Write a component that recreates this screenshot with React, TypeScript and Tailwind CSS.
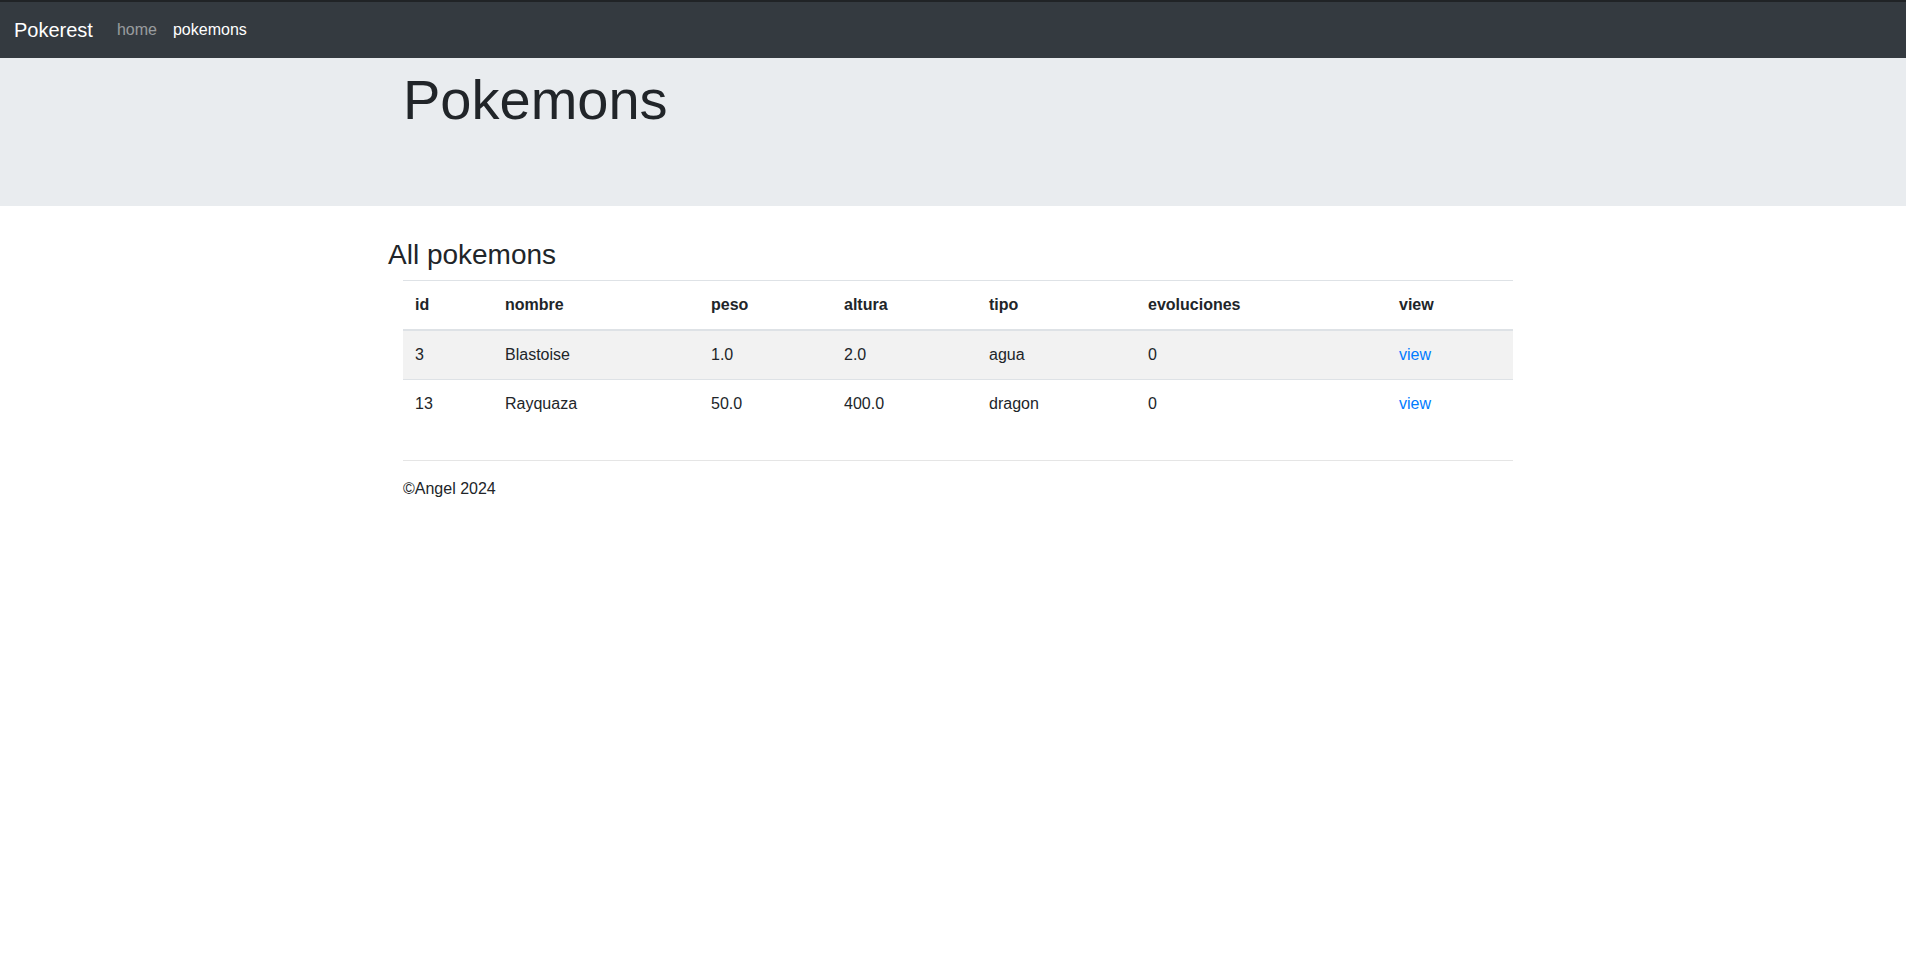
const POKEMONS = [
  { id: 3, nombre: "Blastoise", peso: "1.0", altura: "2.0", tipo: "agua", evoluciones: 0 },
  { id: 13, nombre: "Rayquaza", peso: "50.0", altura: "400.0", tipo: "dragon", evoluciones: 0 },
];

const COLS = [
  { label: "id", w: "w-[90px]" },
  { label: "nombre", w: "w-[206px]" },
  { label: "peso", w: "w-[133px]" },
  { label: "altura", w: "w-[145px]" },
  { label: "tipo", w: "w-[159px]" },
  { label: "evoluciones", w: "w-[251px]" },
  { label: "view", w: "w-[126px]" },
];

export default function App() {
  return (
    <div className="min-h-screen bg-white text-[#212529] text-base leading-normal font-['Liberation_Sans',Arial,sans-serif]">
      <div className="h-[2px] bg-[#202326]" />
      <nav className="h-[56px] bg-[#343a40] flex items-center pl-[14px] pr-4">
        <a href="#" className="text-white text-xl leading-[30px] py-[5px] mr-4">
          Pokerest
        </a>
        <ul className="flex">
          <li>
            <a href="#" className="block px-2 py-2 text-white/50">home</a>
          </li>
          <li>
            <a href="#" className="block px-2 py-2 text-white">pokemons</a>
          </li>
        </ul>
      </nav>

      <header className="bg-[#e9ecef] h-[148px] pt-[8px]">
        <div className="w-[1140px] ml-[388px] px-[15px]">
          <h1 className="text-[56px] font-light leading-[1.2]">Pokemons</h1>
        </div>
      </header>

      <main className="w-[1140px] ml-[388px] px-[15px] pt-8">
        <h3 className="-mx-[15px] text-[28px] leading-[1.2] font-medium mb-2">All pokemons</h3>
        <table className="w-full table-fixed border-collapse">
          <thead>
            <tr>
              {COLS.map((c) => (
                <th
                  key={c.label}
                  className={`${c.w} text-left font-bold p-3 border-t border-[#dee2e6] border-b-2`}
                >
                  {c.label}
                </th>
              ))}
            </tr>
          </thead>
          <tbody>
            {POKEMONS.map((p, i) => (
              <tr key={p.id} className={i % 2 === 0 ? "bg-[#f2f2f2]" : ""}>
                <td className="p-3 border-t border-[#dee2e6]">{p.id}</td>
                <td className="p-3 border-t border-[#dee2e6]">{p.nombre}</td>
                <td className="p-3 border-t border-[#dee2e6]">{p.peso}</td>
                <td className="p-3 border-t border-[#dee2e6]">{p.altura}</td>
                <td className="p-3 border-t border-[#dee2e6]">{p.tipo}</td>
                <td className="p-3 border-t border-[#dee2e6]">{p.evoluciones}</td>
                <td className="p-3 border-t border-[#dee2e6]">
                  <a href="#" className="text-[#007bff]">view</a>
                </td>
              </tr>
            ))}
          </tbody>
        </table>
        <hr className="mt-8 mb-4 border-t border-black/10" />
        <footer>
          <p>©Angel 2024</p>
        </footer>
      </main>
    </div>
  );
}
